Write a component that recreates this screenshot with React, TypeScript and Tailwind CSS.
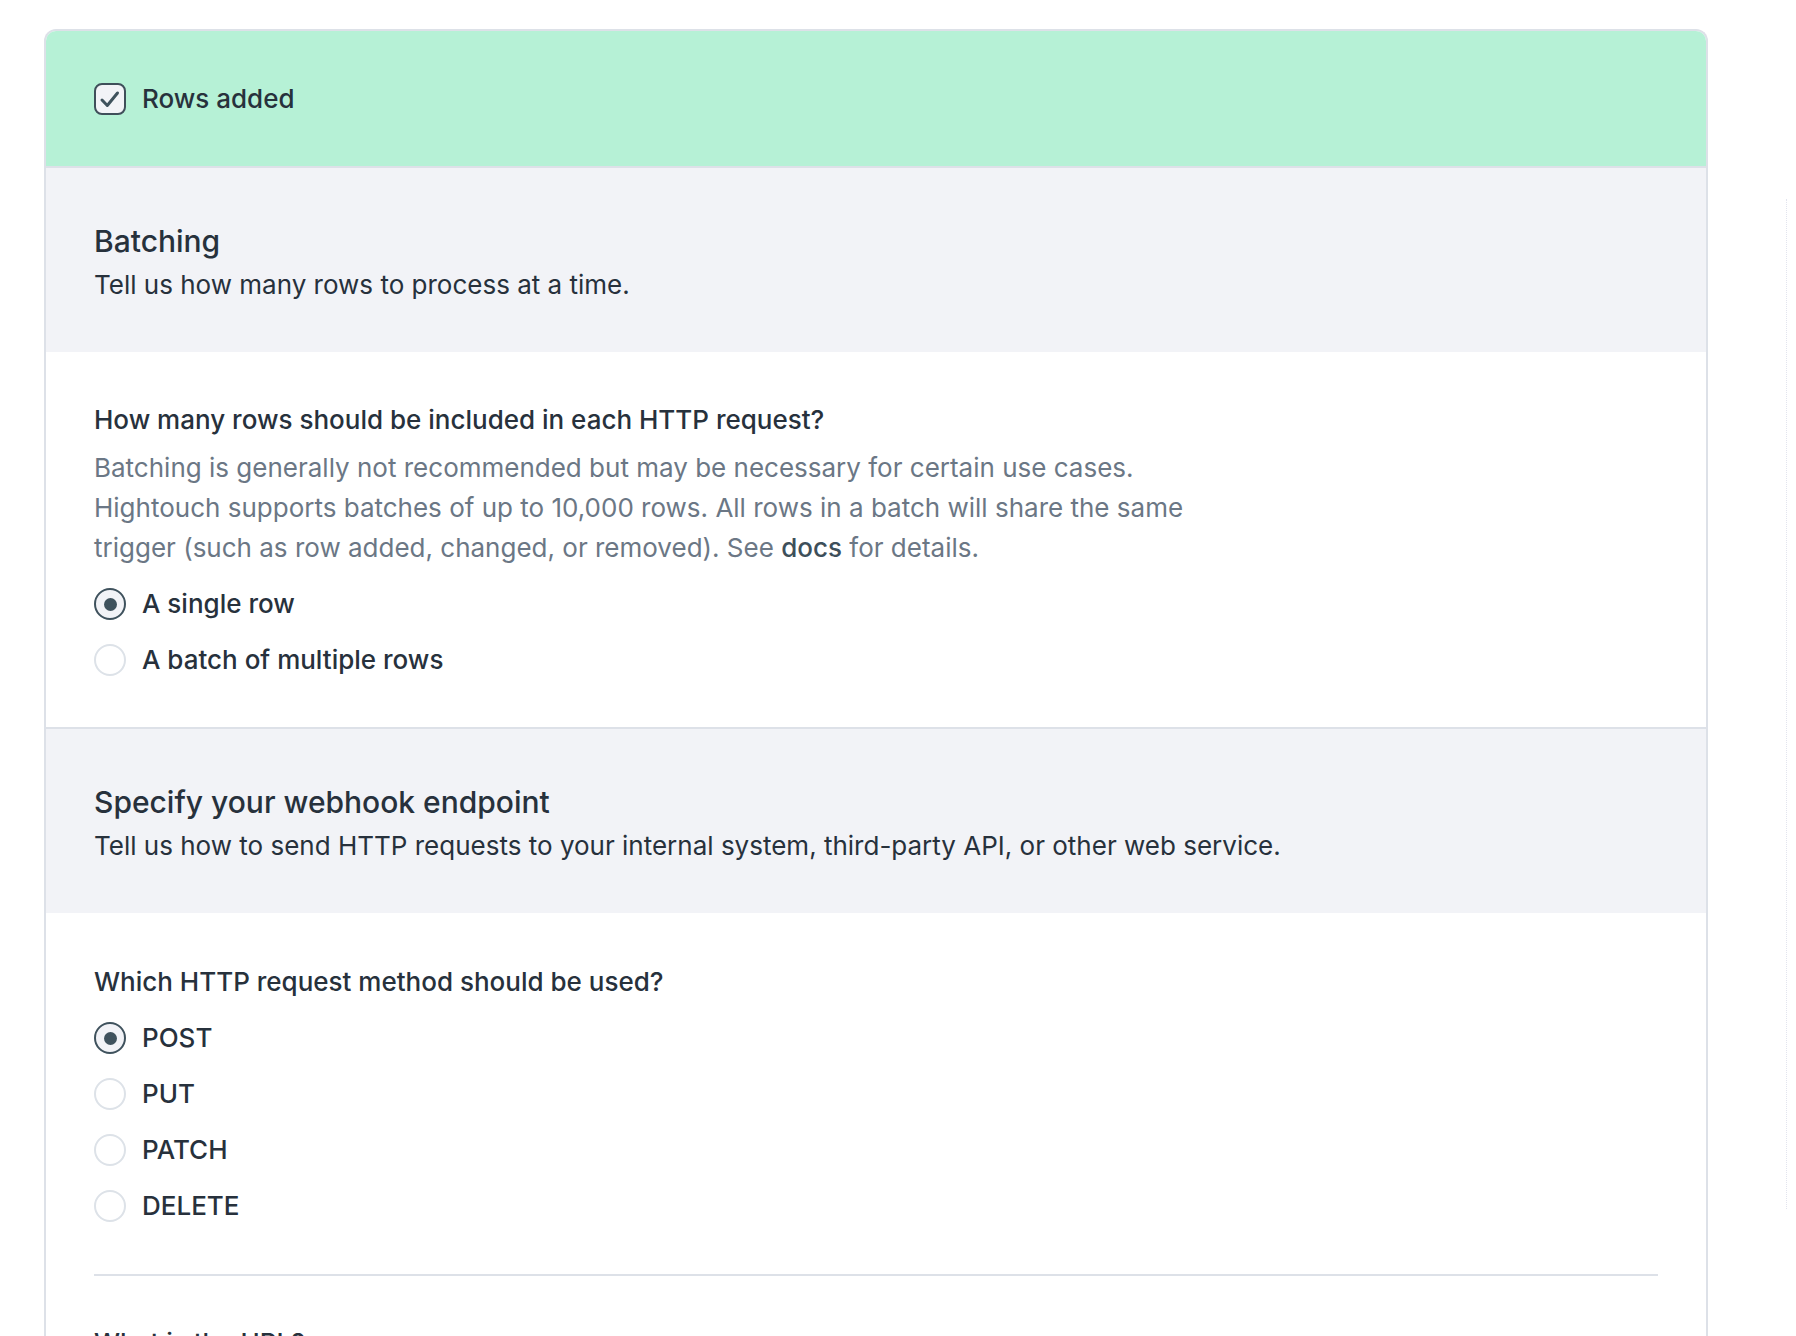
import React from "react";

const font = { fontFamily: "Inter, 'Noto Sans', sans-serif" };

function Radio({ label, checked }: { label: string; checked?: boolean }) {
  return (
    <label className="flex h-[32px] items-center gap-[16px]">
      {checked ? (
        <span className="flex h-[32px] w-[32px] items-center justify-center rounded-full border-[2.5px] border-[#3f525d] bg-[#f2f3f7]">
          <span className="h-[13px] w-[13px] rounded-full bg-[#3f525d]" />
        </span>
      ) : (
        <span className="h-[32px] w-[32px] rounded-full border-2 border-[#dde2e8] bg-white" />
      )}
      <span className="text-[26px] font-medium leading-[32px] text-[#27313c]">{label}</span>
    </label>
  );
}

function SectionHeader({ title, text }: { title: string; text: string }) {
  return (
    <div className="border-t-2 border-[#dde1e8] bg-[#f2f3f7] px-[48px] pt-[52px] pb-[46px]">
      <h2 className="text-[30px] font-medium leading-[42px] text-[#27313c]">{title}</h2>
      <p className="mt-[2px] text-[26px] leading-[42px] text-[#27313c]">{text}</p>
    </div>
  );
}

export default function App() {
  return (
    <div className="flex min-h-screen bg-white pt-[29px] pl-[44px]" style={font}>
      <div className="w-[1664px] overflow-hidden rounded-t-[12px] border-x-2 border-t-2 border-[#dde1e8]">
        <div className="flex h-[135px] items-center gap-[16px] bg-[#b6f1d6] px-[48px]">
          <svg width="32" height="32" viewBox="0 0 32 32">
            <rect x="1" y="1" width="30" height="30" rx="7" fill="#f2f3f7" stroke="#3f4f5a" strokeWidth="2" />
            <polyline
              points="8,17 13.3,22.5 23.5,10"
              fill="none"
              stroke="#3f525d"
              strokeWidth="3"
              strokeLinecap="round"
              strokeLinejoin="round"
            />
          </svg>
          <span className="text-[26px] font-medium leading-[32px] text-[#27313c]">Rows added</span>
        </div>

        <SectionHeader title="Batching" text="Tell us how many rows to process at a time." />

        <div className="bg-white px-[48px] pt-[49px] pb-[51px]">
          <p className="text-[26px] font-medium leading-[38px] text-[#27313c]">
            How many rows should be included in each HTTP request?
          </p>
          <p className="mt-[9px] whitespace-nowrap text-[26px] leading-[40px] text-[#6b7785]">
            Batching is generally not recommended but may be necessary for certain use cases.
            <br />
            Hightouch supports batches of up to 10,000 rows. All rows in a batch will share the same
            <br />
            trigger (such as row added, changed, or removed). See{" "}
            <a className="font-medium text-[#3d4f5a]">docs</a> for details.
          </p>
          <div className="mt-[20px] flex flex-col gap-[24px]">
            <Radio checked label="A single row" />
            <Radio label="A batch of multiple rows" />
          </div>
        </div>

        <SectionHeader
          title="Specify your webhook endpoint"
          text="Tell us how to send HTTP requests to your internal system, third-party API, or other web service."
        />

        <div className="bg-white px-[48px] pt-[50px]">
          <p className="text-[26px] font-medium leading-[38px] text-[#27313c]">
            Which HTTP request method should be used?
          </p>
          <div className="mt-[21px] flex flex-col gap-[24px]">
            <Radio checked label="POST" />
            <Radio label="PUT" />
            <Radio label="PATCH" />
            <Radio label="DELETE" />
          </div>
          <div className="mt-[52px] h-[2px] bg-[#dde1e8]" />
          <p className="mt-[48px] text-[26px] font-medium leading-[38px] text-[#27313c]">What is the URL?</p>
        </div>
      </div>
      <div className="mt-[170px] ml-[78px] h-[1010px] border-l border-dotted border-[#e2e4ee]" />
    </div>
  );
}
